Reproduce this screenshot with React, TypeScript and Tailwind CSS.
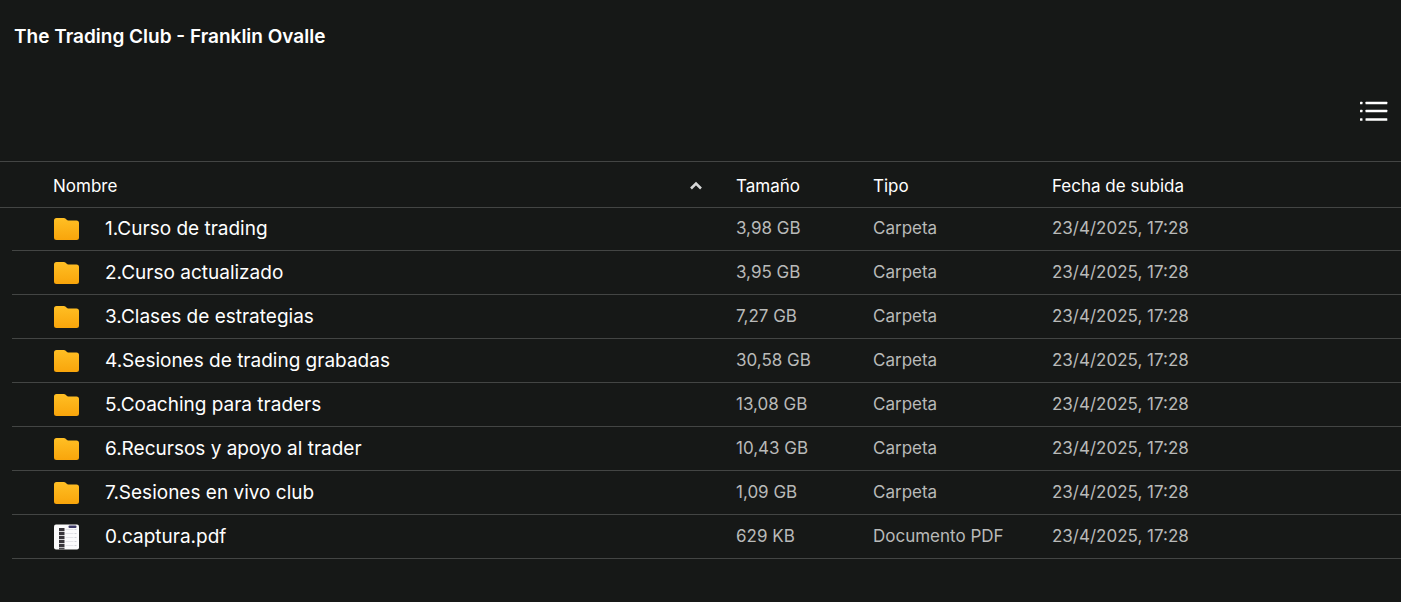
import React from "react";

type Item = {
  name: string;
  size: string;
  type: string;
  date: string;
};

const items: Item[] = [
  { name: "1.Curso de trading", size: "3,98 GB", type: "Carpeta", date: "23/4/2025, 17:28" },
  { name: "2.Curso actualizado", size: "3,95 GB", type: "Carpeta", date: "23/4/2025, 17:28" },
  { name: "3.Clases de estrategias", size: "7,27 GB", type: "Carpeta", date: "23/4/2025, 17:28" },
  { name: "4.Sesiones de trading grabadas", size: "30,58 GB", type: "Carpeta", date: "23/4/2025, 17:28" },
  { name: "5.Coaching para traders", size: "13,08 GB", type: "Carpeta", date: "23/4/2025, 17:28" },
  { name: "6.Recursos y apoyo al trader", size: "10,43 GB", type: "Carpeta", date: "23/4/2025, 17:28" },
  { name: "7.Sesiones en vivo club", size: "1,09 GB", type: "Carpeta", date: "23/4/2025, 17:28" },
  { name: "0.captura.pdf", size: "629 KB", type: "Documento PDF", date: "23/4/2025, 17:28" },
];

const FolderIcon = () => (
  <svg width="26" height="24" viewBox="0 0 26 24" aria-hidden="true">
    <defs>
      <linearGradient id="folder" x1="0" y1="0" x2="0" y2="1">
        <stop offset="0" stopColor="#ffbf24" />
        <stop offset="1" stopColor="#f9a50b" />
      </linearGradient>
    </defs>
    <path
      fill="url(#folder)"
      d="M3.500 1h7.200c.8 0 1.500.3 2 .8l1 1c.4.4.9.6 1.500.6H23.500A2.500 2.500 0 0 1 26 5.900V20.500A2.500 2.500 0 0 1 23.500 23h-20A2.500 2.500 0 0 1 1 20.500v-17A2.500 2.500 0 0 1 3.500 1z"
    />
  </svg>
);

const PdfThumb = () => (
  <svg width="26" height="26" viewBox="0 0 26 26" aria-hidden="true">
    <rect x="1" y="0.500" width="25" height="25" rx="2" fill="#fbfbfc" />
    <rect x="15.500" y="1.500" width="8" height="2.500" rx="1" fill="#3c3966" />
    {[4, 8, 12, 16, 20].map((y) => (
      <g key={y}>
        <rect x="6" y={y} width="5.500" height="3.200" fill="#38353a" />
        <rect x="12.500" y={y + 1} width="8" height="1" fill="#e4e4e9" />
        <rect x="21.500" y={y + 1} width="2" height="1" fill="#d3d3da" />
      </g>
    ))}
    <rect x="6" y="23.800" width="5.500" height="1.700" fill="#4a484c" />
  </svg>
);

const ListIcon = () => (
  <svg width="28" height="22" viewBox="0 0 28 22" fill="#fff" aria-hidden="true">
    {[1.7, 9.7, 18.2].map((y) => (
      <g key={y}>
        <rect x="0" y={y} width="2.500" height="2.500" rx="0.500" />
        <rect x="5.500" y={y} width="21.800" height="2.500" rx="0.500" />
      </g>
    ))}
  </svg>
);

const SortIcon = () => (
  <svg
    width="14"
    height="14"
    viewBox="0 0 14 14"
    fill="none"
    stroke="#d6d7d7"
    strokeWidth="2.500"
    aria-hidden="true"
  >
    <path d="M2 9.500 7 4.500l5 5" />
  </svg>
);

const App = () => {
  return (
    <main className="min-h-screen bg-[#161817] font-['Inter',sans-serif] text-white">
      <header className="px-3.5 pt-[23px]">
        <h1 className="text-[19px] leading-7 font-semibold">The Trading Club - Franklin Ovalle</h1>
      </header>

      <div className="flex justify-end pt-[49px] pr-[13px] pb-[39px]">
        <button type="button" aria-label="Vista de lista">
          <ListIcon />
        </button>
      </div>

      <table className="w-full table-fixed border-separate border-spacing-0 text-left text-[17px] leading-6">
        <colgroup>
          <col className="w-3" />
          <col />
          <col className="w-[137px]" />
          <col className="w-[179px]" />
          <col className="w-[349px]" />
        </colgroup>
        <thead>
          <tr className="h-[47px] *:border-y *:border-[#434544] *:p-0 *:pt-0.5 *:font-normal">
            <td />
            <th scope="col" aria-sort="ascending">
              <button type="button" className="flex w-full items-center justify-between pr-[33px] pl-[41px]">
                Nombre
                <SortIcon />
              </button>
            </th>
            <th scope="col">
              <button type="button">Tamaño</button>
            </th>
            <th scope="col">
              <button type="button">Tipo</button>
            </th>
            <th scope="col">
              <button type="button">Fecha de subida</button>
            </th>
          </tr>
        </thead>
        <tbody className="text-[#b9bab9]">
          {items.map((item) => (
            <tr key={item.name} className="h-11 *:border-[#434544] *:p-0 *:not-first:border-b first:h-[43px]">
              <td />
              <td>
                <a href="#" className="flex items-center gap-[26px] pl-[41px] text-[19px] leading-6 text-white">
                  {item.type === "Carpeta" ? <FolderIcon /> : <PdfThumb />}
                  {item.name}
                </a>
              </td>
              <td className="leading-5"><div className="pb-0.5">{item.size}</div></td>
              <td className="leading-5"><div className="pb-0.5">{item.type}</div></td>
              <td className="leading-5"><div className="pb-0.5">{item.date}</div></td>
            </tr>
          ))}
        </tbody>
      </table>
    </main>
  );
};

export default App;
